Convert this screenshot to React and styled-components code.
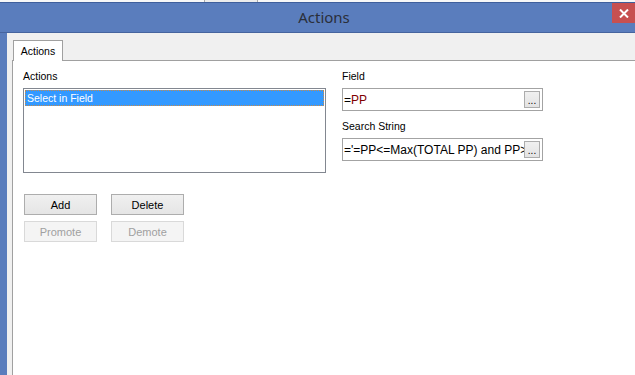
import React from 'react';
import styled, { createGlobalStyle } from 'styled-components';

const Global = createGlobalStyle`
  html, body {
    margin: 0;
    padding: 0;
    background: #f0f0f0;
    overflow: hidden;
  }
  body {
    font-family: "Liberation Sans", Arial, sans-serif;
    font-size: 10.5px;
    color: #000;
  }
`;

const Page = styled.div`
  width: 635px;
  height: 375px;
  display: flex;
  flex-direction: column;
  overflow: hidden;
`;

const TopStrip = styled.div`
  height: 2px;
  background: #f7f7f7;
  display: flex;
  border-bottom: 1px solid #3f5f9c;
`;

const StripTab = styled.div`
  width: 52px;
  margin-left: ${p => p.offset}px;
  border-left: 1px solid #a9a9a9;
  border-right: 1px solid #a9a9a9;
  background: #ececec;
`;

const Window = styled.div`
  flex: 1;
  display: flex;
  flex-direction: column;
  background: #5a7dbd;
  padding-left: 7px;
`;

const TitleBar = styled.div`
  height: 29px;
  position: relative;
  display: flex;
  align-items: center;
  justify-content: center;
  margin-left: -7px;
  border-bottom: 1px solid #46649e;
`;

const Title = styled.div`
  font-family: "Noto Sans", "Open Sans", sans-serif;
  font-size: 15px;
  color: #2a2f3a;
  margin-left: 13px;
  margin-top: -2px;
`;

const CloseButton = styled.div`
  position: absolute;
  right: 0;
  top: 0;
  width: 23px;
  height: 20px;
  background: #c75050;
  display: flex;
  align-items: center;
  justify-content: center;
`;

const Client = styled.div`
  flex: 1;
  background: #f0f0f0;
  display: flex;
  flex-direction: column;
  padding: 7px 0 0 5px;
`;

const TabStrip = styled.div`
  display: flex;
  height: 20px;
`;

const Tab = styled.div`
  width: 48px;
  height: 20px;
  border: 1px solid #a0a0a0;
  border-bottom: none;
  background: #fff;
  display: flex;
  align-items: center;
  justify-content: center;
  margin-left: 1px;
  margin-bottom: -1px;
  position: relative;
  z-index: 1;
`;

const TabPage = styled.div`
  flex: 1;
  width: 619px;
  background: #fff;
  border: 1px solid #a0a0a0;
  border-right-width: 2px;
  border-bottom: none;
  padding: 8px 0 0 10px;
  display: flex;
  flex-direction: column;
`;

const Columns = styled.div`
  display: grid;
  grid-template-columns: 303px 201px;
  column-gap: 16px;
`;

const Column = styled.div`
  display: flex;
  flex-direction: column;
`;

const Label = styled.div`
  height: 14px;
  line-height: 14px;
  margin-bottom: ${p => p.gap || 5}px;
  margin-top: ${p => p.top || 0}px;
`;

const ListBox = styled.div`
  height: 81px;
  border: 1px solid #828790;
  padding: 1px;
`;

const ListItem = styled.div`
  height: 14px;
  line-height: 14px;
  padding-left: 1px;
  background: ${p => (p.selected ? '#3399ff' : 'transparent')};
  color: ${p => (p.selected ? '#fff' : '#000')};
  border: 1px dotted ${p => (p.selected ? '#c68a4a' : 'transparent')};
`;

const TextBox = styled.div`
  height: 21px;
  border: 1px solid #a3a3a3;
  display: flex;
  align-items: center;
  padding-left: 1px;
  overflow: hidden;
  white-space: nowrap;
`;

const TextValue = styled.div`
  flex: 1;
  min-width: 0;
  overflow: hidden;
  font-size: 12px;
`;

const FieldRef = styled.span`
  color: ${p => p.color || '#000'};
`;

const EllipsisButton = styled.div`
  flex: none;
  width: 14px;
  height: 15px;
  margin-right: 2px;
  border: 1px solid #acacac;
  background: linear-gradient(#f0f0f0, #e3e3e3);
  display: flex;
  align-items: flex-end;
  justify-content: center;
  font-size: 10px;
  line-height: 12px;
  color: #000;
`;

const ButtonGrid = styled.div`
  display: grid;
  grid-template-columns: 73px 73px;
  column-gap: 14px;
  row-gap: 6px;
  margin-top: 21px;
  margin-left: 1px;
`;

const Button = styled.div`
  height: 19px;
  border: 1px solid ${p => (p.disabled ? '#d9d9d9' : '#adadad')};
  background: ${p => (p.disabled ? '#f4f4f4' : 'linear-gradient(#f0f0f0, #e5e5e5)')};
  color: ${p => (p.disabled ? '#a0a0a0' : '#000')};
  display: flex;
  align-items: center;
  justify-content: center;
  font-size: 11px;
`;

export default function App() {
  return (
    <Page>
      <Global />
      <TopStrip>
        <StripTab offset={204} />
      </TopStrip>
      <Window>
        <TitleBar>
          <Title>Actions</Title>
          <CloseButton>
            <svg width="10" height="9" viewBox="0 0 10 9">
              <path d="M1 0.5 L9 8.5 M9 0.5 L1 8.5" stroke="#fff" strokeWidth="2" />
            </svg>
          </CloseButton>
        </TitleBar>
        <Client>
          <TabStrip>
            <Tab>Actions</Tab>
          </TabStrip>
          <TabPage>
            <Columns>
              <Column>
                <Label>Actions</Label>
                <ListBox>
                  <ListItem selected>Select in Field</ListItem>
                </ListBox>
              </Column>
              <Column>
                <Label>Field</Label>
                <TextBox>
                  <TextValue>
                    =<FieldRef color="#800000">PP</FieldRef>
                  </TextValue>
                  <EllipsisButton>...</EllipsisButton>
                </TextBox>
                <Label top={8} gap={5}>Search String</Label>
                <TextBox>
                  <TextValue>='=PP&lt;=Max(TOTAL PP) and PP&gt;</TextValue>
                  <EllipsisButton>...</EllipsisButton>
                </TextBox>
              </Column>
            </Columns>
            <ButtonGrid>
              <Button>Add</Button>
              <Button>Delete</Button>
              <Button disabled>Promote</Button>
              <Button disabled>Demote</Button>
            </ButtonGrid>
          </TabPage>
        </Client>
      </Window>
    </Page>
  );
}
